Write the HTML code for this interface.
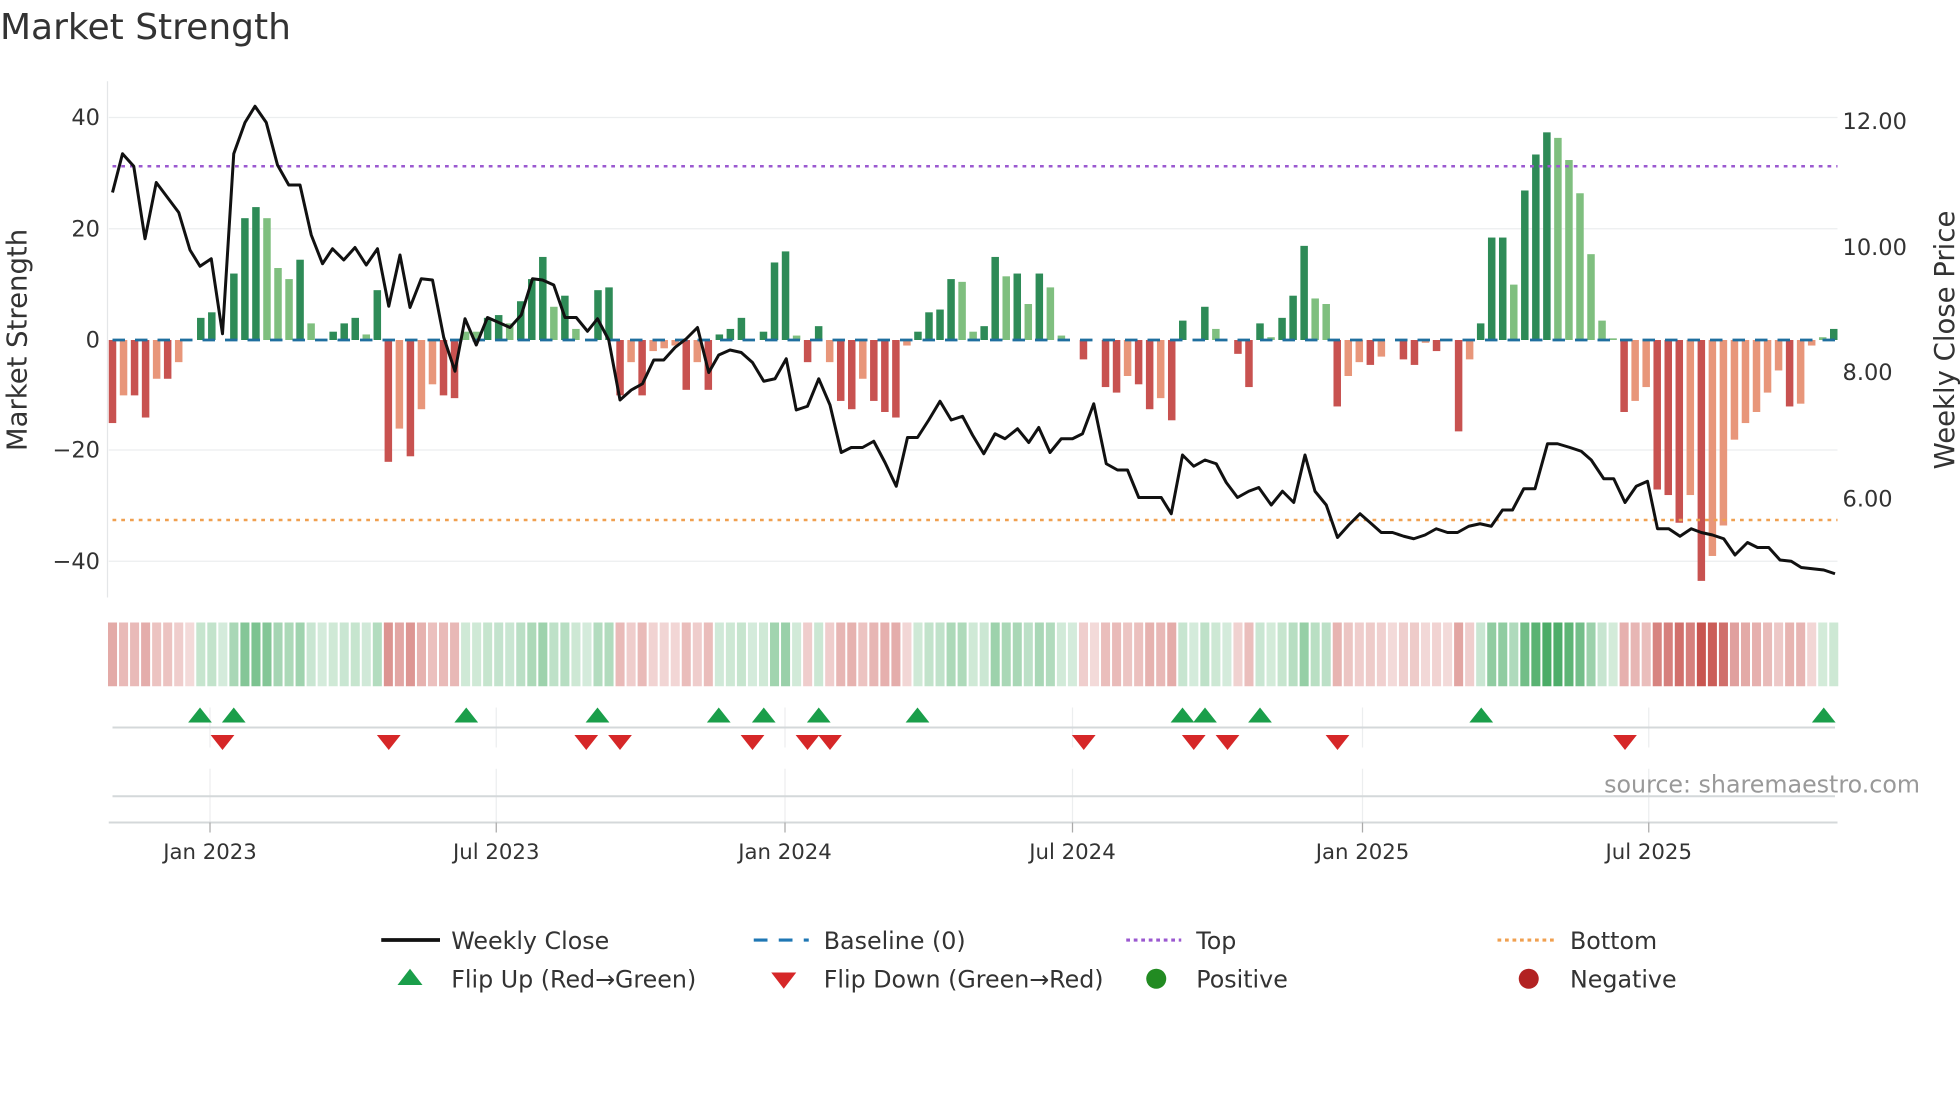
<!DOCTYPE html>
<html><head><meta charset="utf-8"><style>
html,body{margin:0;padding:0;background:#fff;}
svg{display:block;font-family:"DejaVu Sans","Liberation Sans",sans-serif;}
</style></head><body>
<svg id="s" width="1960" height="1102" viewBox="0 0 1568 881.6" xmlns="http://www.w3.org/2000/svg">
<rect width="1568" height="881.6" fill="#fff"/>
<text x="0" y="31" font-size="28.8" fill="#333">Market Strength</text>
<g stroke="#eceeef" stroke-width="1">
<line x1="87" y1="94" x2="1470" y2="94"/><line x1="87" y1="183" x2="1470" y2="183"/>
<line x1="87" y1="360" x2="1470" y2="360"/><line x1="87" y1="449" x2="1470" y2="449"/>
</g>
<line x1="86" y1="65" x2="86" y2="478" stroke="#e4e6e8"/>
<g font-size="18" fill="#333" text-anchor="end">
<text x="80" y="100">40</text><text x="80" y="189">20</text><text x="80" y="278">0</text>
<text x="80" y="366">−20</text><text x="80" y="455">−40</text>
</g>
<g font-size="18" fill="#333">
<text x="1474" y="103">12.00</text><text x="1474" y="204">10.00</text>
<text x="1474" y="304">8.00</text><text x="1474" y="405">6.00</text>
</g>
<text transform="translate(21,272) rotate(-90)" font-size="22" fill="#333" text-anchor="middle">Market Strength</text>
<text transform="translate(1563,272) rotate(-90)" font-size="22" fill="#333" text-anchor="middle">Weekly Close Price</text>
<g id="bars"></g>
<line x1="90" y1="272" x2="1470" y2="272" stroke="#1f6f9f" stroke-width="2.2" stroke-dasharray="10,8"/>
<line x1="90" y1="133" x2="1470" y2="133" stroke="#9b59d0" stroke-width="2" stroke-dasharray="3,4"/>
<line x1="90" y1="416" x2="1470" y2="416" stroke="#f0a050" stroke-width="2" stroke-dasharray="3,4"/>
<polyline id="price" fill="none" stroke="#111" stroke-width="2.4" stroke-linejoin="round"/>
<g id="heat"></g>
<g stroke="#eceeef" stroke-width="1">
<line x1="168" y1="566" x2="168" y2="598"/><line x1="397" y1="566" x2="397" y2="598"/><line x1="628" y1="566" x2="628" y2="598"/><line x1="858" y1="566" x2="858" y2="598"/><line x1="1090" y1="566" x2="1090" y2="598"/><line x1="1319" y1="566" x2="1319" y2="598"/>
<line x1="168" y1="615" x2="168" y2="658"/><line x1="397" y1="615" x2="397" y2="658"/><line x1="628" y1="615" x2="628" y2="658"/><line x1="858" y1="615" x2="858" y2="658"/><line x1="1090" y1="615" x2="1090" y2="658"/><line x1="1319" y1="615" x2="1319" y2="658"/>
</g>
<line x1="90" y1="582" x2="1468" y2="582" stroke="#d4d8da" stroke-width="1.6"/>
<line x1="90" y1="637" x2="1468" y2="637" stroke="#d4d8da" stroke-width="1.6"/>
<line x1="87" y1="658" x2="1470" y2="658" stroke="#d4d8da" stroke-width="1.6"/>
<g stroke="#aaa" stroke-width="1">
<line x1="168" y1="658" x2="168" y2="666"/><line x1="397" y1="658" x2="397" y2="666"/><line x1="628" y1="658" x2="628" y2="666"/><line x1="858" y1="658" x2="858" y2="666"/><line x1="1090" y1="658" x2="1090" y2="666"/><line x1="1319" y1="658" x2="1319" y2="666"/>
</g>
<g id="marks"></g>
<g font-size="17" fill="#333" text-anchor="middle">
<text x="168" y="687">Jan 2023</text><text x="397" y="687">Jul 2023</text><text x="628" y="687">Jan 2024</text>
<text x="858" y="687">Jul 2024</text><text x="1090" y="687">Jan 2025</text><text x="1319" y="687">Jul 2025</text>
</g>
<text x="1536" y="634" font-size="19" fill="#999" text-anchor="end">source: sharemaestro.com</text>
<g font-size="19" fill="#333">
<line x1="305" y1="752" x2="352" y2="752" stroke="#111" stroke-width="3"/><text x="361" y="759">Weekly Close</text>
<line x1="603" y1="752" x2="647" y2="752" stroke="#1f77b4" stroke-width="2.5" stroke-dasharray="11,9"/><text x="659" y="759">Baseline (0)</text>
<line x1="901" y1="752" x2="945" y2="752" stroke="#9b59d0" stroke-width="2.5" stroke-dasharray="3,3"/><text x="957" y="759">Top</text>
<line x1="1198" y1="752" x2="1243" y2="752" stroke="#f0a050" stroke-width="2.5" stroke-dasharray="3,3"/><text x="1256" y="759">Bottom</text>
<polygon points="328,775 338,788 318,788" fill="#1a9e4a"/><text x="361" y="790">Flip Up (Red→Green)</text>
<polygon points="617,778 637,778 627,791" fill="#d62728"/><text x="659" y="790">Flip Down (Green→Red)</text>
<circle cx="925" cy="783" r="8" fill="#228b22"/><text x="957" y="790">Positive</text>
<circle cx="1223" cy="783" r="8" fill="#b22222"/><text x="1256" y="790">Negative</text>
</g>
</svg>
<script>
var NS="http://www.w3.org/2000/svg";
function el(t,a,p){var e=document.createElementNS(NS,t);for(var k in a)e.setAttribute(k,a[k]);p.appendChild(e);return e;}
var V="-15D -10L -10D -14D -7L -7D -4L 0L 4D 5D 0L 12D 22D 24D 22L 13L 11L 14.5D 3L 0L 1.5D 3D 4D 1L 9D -22D -16L -21D -12.5L -8L -10D -10.5D 1.5L 1.5L 4D 4.5D 3L 7D 11D 15D 6L 8D 2L 0L 9D 9.5D -10D -4L -10D -2L -1.5L -1L -9D -4L -9D 1D 2D 4D 0L 1.5D 14D 16D 0.8L -4D 2.5D -4L -11D -12.5D -7L -11D -13D -14D -1L 1.5D 5D 5.5D 11D 10.5L 1.5L 2.5D 15D 11.5L 12D 6.5L 12D 9.5L 0.8L 0L -3.5D 0L -8.5D -9.5D -6.5L -8D -12.5D -10.5L -14.5D 3.5D 0L 6D 2L 0L -2.5D -8.5D 3D 0.5L 4D 8D 17D 7.5L 6.5L -12D -6.5L -4L -4.5D -3L 0L -3.5D -4.5D -0.5L -2D 0L -16.5D -3.5L 3D 18.5D 18.5D 10L 27D 33.5D 37.5D 36.5L 32.5L 26.5L 15.5L 3.5L 0.3L -13D -11L -8.5L -27D -28D -33D -28L -43.5D -39L -33.5L -18L -15L -13L -9.5L -5.5L -12D -11.5L -1L 0.5L 2D".split(" ");
var bars=document.getElementById("bars"),heat=document.getElementById("heat");
var n=V.length,x0=90,dx=(1467-90)/(n-1),last=-1;
for(var i=0;i<n;i++){
 var s=V[i],v=parseFloat(s),t=s.slice(-1),x=x0+i*dx,h=Math.abs(v)*4.43;
 var c=v>=0?(t=="D"?"#2e8b57":"#7fbf7f"):(t=="D"?"#c85250":"#e8967a");
 if(h>0.3)el("rect",{x:x-3,y:v>=0?272-h:272,width:6,height:h,fill:c},bars);
 if(v!=0)last=v>0?1:-1;
 var a=Math.min(1,0.22+Math.abs(v)/40*0.75);
 var hc=(v>0||(v==0&&last>0))?"rgba(60,165,90,"+a+")":"rgba(200,85,80,"+a+")";
 el("rect",{x:x-3.6,y:498,width:dx-1.6,height:51,fill:hc},heat);
}
var P=[[90,154],[98,123],[107,133],[116,191],[125,146],[134,158],[143,170],[152,200],[160,213],[169,207],[178,267],[187,123],[196,98],[204,85],[213,98],[222,132],[231,148],[240,148],[249,188],[258,211],[266,199],[275,208],[284,198],[293,212],[302,199],[311,245],[320,204],[328,246],[337,223],[346,224],[355,270],[364,297],[372,255],[381,276],[390,254],[399,258],[408,262],[417,252],[426,223],[434,224],[443,228],[452,254],[461,254],[470,265],[478,255],[487,272],[496,320],[505,312],[514,307],[523,288],[531,288],[540,278],[549,271],[558,262],[567,298],[575,284],[584,280],[593,282],[602,290],[611,305],[620,303],[629,287],[637,328],[646,325],[655,303],[664,324],[673,362],[681,358],[690,358],[699,353],[708,370],[717,389],[726,350],[734,350],[743,336],[752,321],[761,336],[770,333],[778,348],[787,363],[796,347],[804,351],[814,343],[823,354],[831,342],[840,362],[849,351],[858,351],[866,347],[875,323],[885,371],[894,376],[902,376],[911,398],[929,398],[937,411],[946,364],[955,373],[964,368],[973,371],[981,386],[990,398],[999,393],[1007,390],[1017,404],[1026,393],[1035,402],[1044,364],[1052,393],[1061,404],[1070,430],[1079,420],[1088,411],[1096,418],[1105,426],[1114,426],[1123,429],[1131,431],[1140,428],[1149,423],[1158,426],[1166,426],[1175,421],[1184,419],[1193,421],[1202,408],[1210,408],[1219,391],[1228,391],[1238,355],[1246,355],[1256,358],[1265,361],[1273,368],[1283,383],[1291,383],[1300,402],[1309,389],[1318,385],[1326,423],[1335,423],[1344,429],[1353,423],[1361,426],[1370,428],[1379,431],[1388,444],[1398,434],[1406,438],[1415,438],[1424,448],[1433,449],[1441,454],[1459,456],[1468,459]];
document.getElementById("price").setAttribute("points",P.map(function(p){return p.join(",")}).join(" "));
var marks=document.getElementById("marks");
[160,187,373,478,575,611,655,734,946,964,1008,1185,1459].forEach(function(x){el("polygon",{points:x+",566 "+(x+9.5)+",578 "+(x-9.5)+",578",fill:"#1a9e4a"},marks);});
[178,311,469,496,602,646,664,867,955,982,1070,1300].forEach(function(x){el("polygon",{points:(x-9.5)+",588 "+(x+9.5)+",588 "+x+",600",fill:"#d62728"},marks);});
</script>
</body></html>
